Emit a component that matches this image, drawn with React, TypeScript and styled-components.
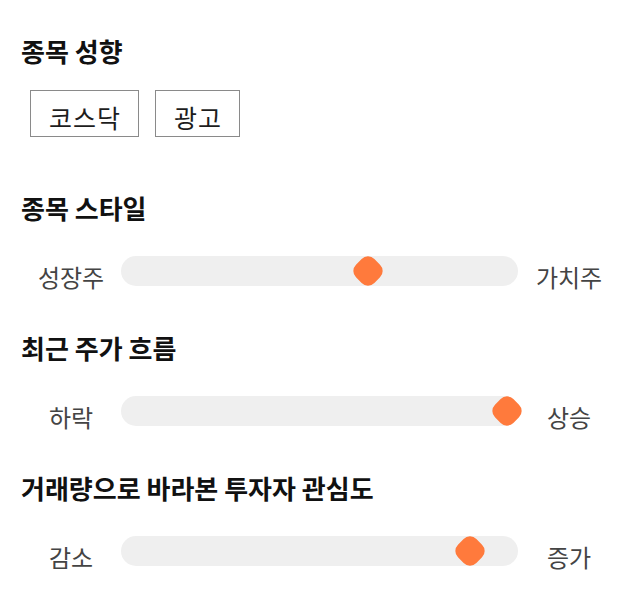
import styled, { createGlobalStyle } from "styled-components";

const GlobalStyle = createGlobalStyle`
  html, body {
    margin: 0;
    padding: 0;
    background: #ffffff;
  }
  body {
    font-family: "Noto Sans CJK KR", "Noto Sans", sans-serif;
  }
`;

type SliderData = {
  title: string;
  left: string;
  right: string;
  value: number;
};

const sliders: SliderData[] = [
  { title: "종목 스타일", left: "성장주", right: "가치주", value: 63 },
  { title: "최근 주가 흐름", left: "하락", right: "상승", value: 100 },
  { title: "거래량으로 바라본 투자자 관심도", left: "감소", right: "증가", value: 90 },
];

const App = () => {
  return (
    <>
      <GlobalStyle />
      <Page>
        <Section $after={55}>
          <Title>종목 성향</Title>
          <Tags>
            <Tag>코스닥</Tag>
            <Tag>광고</Tag>
          </Tags>
        </Section>

        {sliders.map((s) => (
          <Section key={s.title} $after={46}>
            <Title>{s.title}</Title>
            <SliderRow>
              <SideLabel>{s.left}</SideLabel>
              <Track>
                <ThumbArea>
                  <Thumb style={{ left: `${s.value}%` }} />
                </ThumbArea>
              </Track>
              <SideLabel>{s.right}</SideLabel>
            </SliderRow>
          </Section>
        ))}
      </Page>
    </>
  );
};

const Page = styled.div`
  width: 640px;
  box-sizing: border-box;
  padding: 35px 20px 0 21px;
  display: flex;
  flex-direction: column;
`;

const Section = styled.section<{ $after: number }>`
  display: flex;
  flex-direction: column;
  gap: 23px;
  margin-bottom: ${(p) => p.$after}px;

  & + & {
    gap: 32px;
  }
`;

const Title = styled.h2`
  margin: 0;
  font-size: 26px;
  font-weight: 700;
  line-height: 32px;
  color: #111111;
  white-space: nowrap;
`;

const Tags = styled.div`
  display: flex;
  gap: 16px;
  padding-left: 9px;
`;

const Tag = styled.div`
  height: 47px;
  box-sizing: border-box;
  padding: 6px 17px 0 18px;
  border: 1px solid #8a8a8a;
  display: flex;
  align-items: center;
  font-size: 25px;
  letter-spacing: 1px;
  color: #1d1d1d;
`;

const SliderRow = styled.div`
  display: grid;
  grid-template-columns: 100px 1fr 102px;
  align-items: start;
  height: 30px;
`;

const SideLabel = styled.span`
  text-align: center;
  font-size: 24px;
  line-height: 30px;
  padding-top: 6px;
  color: #444444;
  white-space: nowrap;
`;

const Track = styled.div`
  position: relative;
  height: 30px;
  border-radius: 15px;
  background: #efefef;
`;

const ThumbArea = styled.div`
  position: absolute;
  top: 0;
  bottom: 0;
  left: 11px;
  right: 11px;
`;

const Thumb = styled.div`
  position: absolute;
  top: 50%;
  width: 26px;
  height: 26px;
  border-radius: 9px;
  background: #ff7a3c;
  transform: translate(-50%, -50%) rotate(45deg);
`;

export default App;
